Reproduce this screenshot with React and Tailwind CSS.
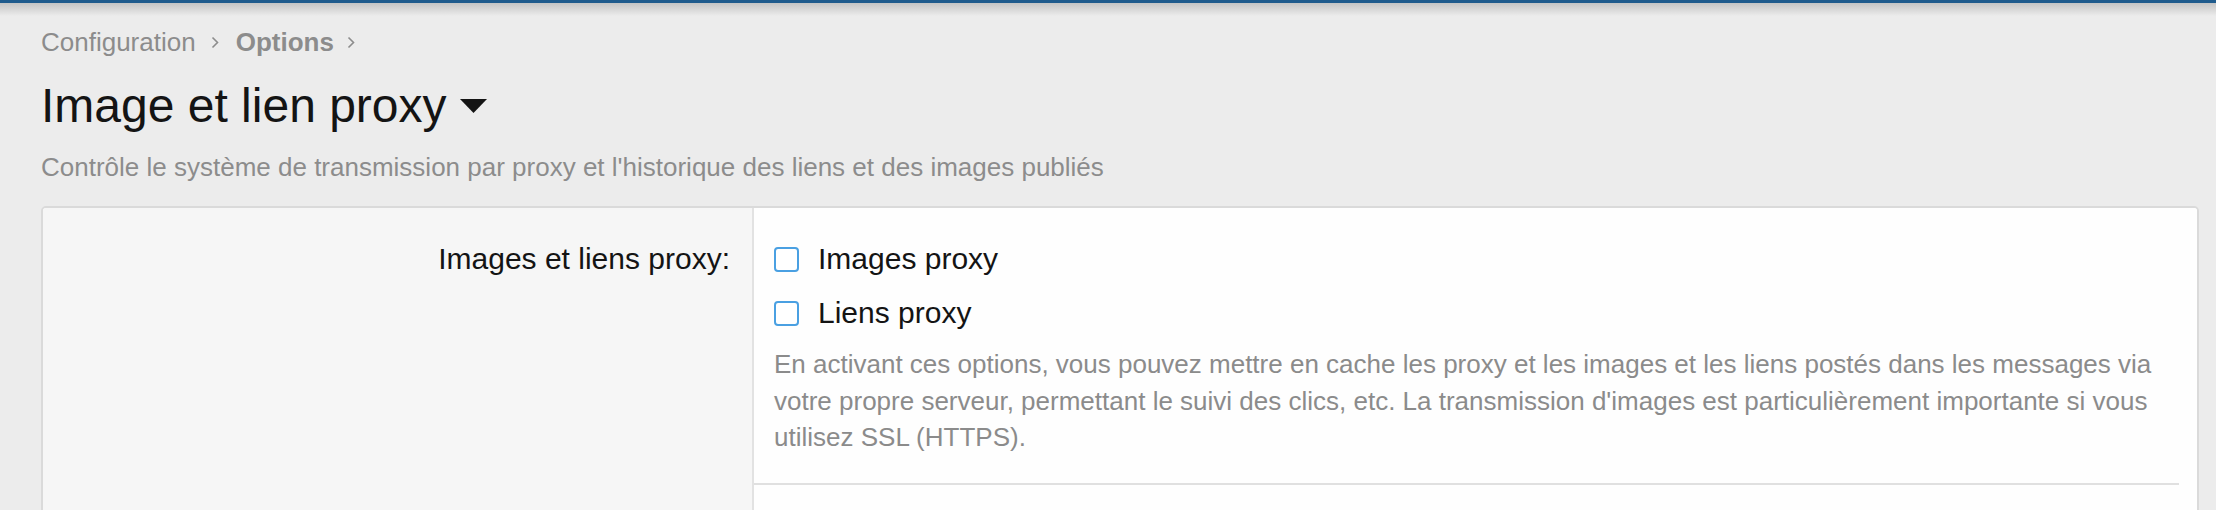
export default function App() {
  const ProxyOption = ({ label }) => (
    <label className="flex items-center h-[36px] cursor-pointer">
      <span className="w-[25px] h-[25px] border-2 border-[#4aa0e2] rounded-[4px] bg-white shrink-0" />
      <span className="ml-[19px] text-[30px] leading-[36px] text-[#141414]">{label}</span>
    </label>
  );

  const Chevron = () => (
    <svg width="8" height="13" viewBox="0 0 8 13" className="shrink-0">
      <polyline points="1.5,1.5 6.5,6.5 1.5,11.5" fill="none" stroke="#8c8c8c" strokeWidth="1.6" />
    </svg>
  );

  return (
    <div className="min-h-screen bg-[#ececec] font-['Liberation_Sans',Arial,sans-serif] overflow-hidden">
      {/* top bar + shadow */}
      <div className="h-[3px] bg-[#1f5b8d]" />
      <div className="h-[13px] bg-linear-to-b from-[#c4c4c4] to-[#ececec]" />

      <div className="pl-[41px] pr-[17px]">
        {/* Breadcrumb */}
        <nav className="mt-[8px] flex items-center h-[36px] text-[26px] leading-[36px] text-[#8c8c8c]">
          <span>Configuration</span>
          <span className="ml-[15px] mr-[17px]"><Chevron /></span>
          <span className="font-bold">Options</span>
          <span className="ml-[13px]"><Chevron /></span>
        </nav>

        {/* Title */}
        <h1 className="mt-[18px] flex items-center text-[48px] leading-[56px] text-[#141414]">
          Image et lien proxy
          <svg width="27" height="14" viewBox="0 0 27 14" className="ml-[13px]">
            <polygon points="0,0 27,0 13.5,14" fill="#141414" />
          </svg>
        </h1>

        <p className="mt-[15px] text-[26px] leading-[36px] text-[#8c8c8c]">
          Contrôle le système de transmission par proxy et l'historique des liens et des images publiés
        </p>

        {/* Options panel */}
        <div className="mt-[21px] flex border-2 border-[#dadada] rounded-[5px] overflow-hidden bg-white">
          {/* Left column - label */}
          <div className="w-[711px] shrink-0 bg-[#f6f6f6] border-r-2 border-[#e2e2e2]">
            <div className="pt-[33px] pr-[22px] text-right text-[30px] leading-[36px] text-[#141414]">
              Images et liens proxy:
            </div>
          </div>

          {/* Right column - controls */}
          <div className="flex-1 bg-[#fefefe]">
            <div className="mr-[18px] border-b-2 border-[#e0e0e0] pl-[20px] pt-[33px] pb-[27px]">
              <div className="flex flex-col gap-[18px]">
                <ProxyOption label="Images proxy" />
                <ProxyOption label="Liens proxy" />
              </div>
              <p className="mt-[15px] text-[26px] leading-[36.5px] text-[#8b8b8b]">
                En activant ces options, vous pouvez mettre en cache les proxy et les images et les liens postés dans les messages via votre propre serveur, permettant le suivi des clics, etc. La transmission d'images est particulièrement importante si vous utilisez SSL (HTTPS).
              </p>
            </div>
            <div className="h-[120px]" />
          </div>
        </div>
      </div>
    </div>
  );
}
